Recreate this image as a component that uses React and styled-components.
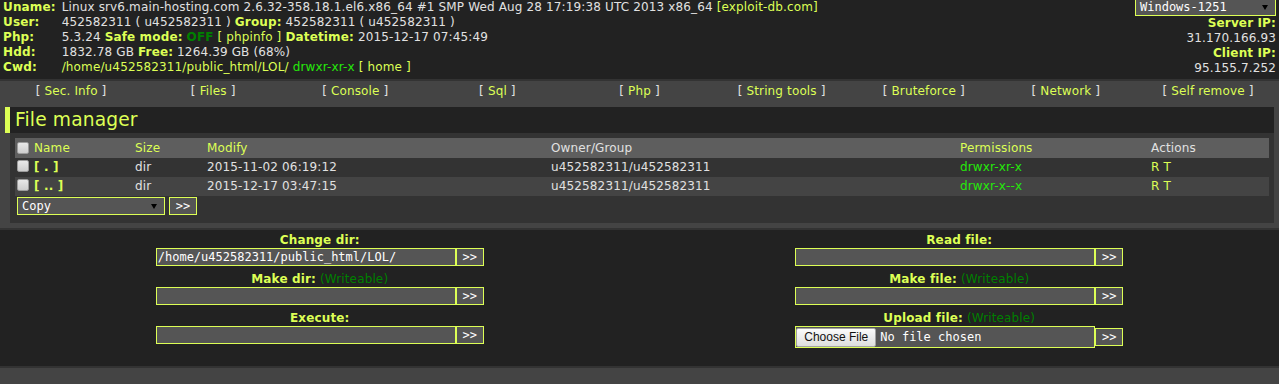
import styled, { createGlobalStyle } from "styled-components";

const SANS = `"DejaVu Sans", Verdana, sans-serif`;
const MONO = `"DejaVu Sans Mono", "Liberation Mono", monospace`;
const LIME = "#df5";
const BRIGHT = "#25e80a";

const GlobalStyle = createGlobalStyle`
  body {
    margin: 0;
    background: #444;
    color: #e1e1e1;
    font: 12px/15px ${SANS};
    letter-spacing: 0.14px;
  }
`;

const InfoBar = styled.header`
  display: grid;
  grid-template-columns: auto 1fr auto;
  margin-top: -5px;
  padding: 3px 0;
  background: #222;
  white-space: nowrap;
`;

const InfoCell = styled.div`
  display: flex;
  flex-direction: column;
  align-items: ${(p) => (p.$right ? "flex-end" : "flex-start")};
  padding: ${(p) => (p.$right ? 0 : 2)}px 3px 0;
`;

const Line = styled.div`
  height: 15px;
`;

const Label = styled.span`
  color: ${LIME};
  font-weight: bold;
`;

const Link = styled.a`
  color: ${LIME};
  text-decoration: none;
  font-weight: ${(p) => (p.$bold ? "bold" : "normal")};
`;

const Perm = styled.span`
  color: ${BRIGHT};
`;

const Safe = styled.b`
  color: green;
`;

const Writeable = styled.span`
  color: green;
`;

const FakeSelect = styled.div`
  box-sizing: border-box;
  width: ${(p) => p.$w}px;
  height: 18px;
  display: flex;
  align-items: center;
  justify-content: space-between;
  padding: 0 7px 0 4px;
  background: #555;
  border: 1px solid ${LIME};
  color: #fff;
  font: 12px/16px ${MONO};
  letter-spacing: normal;

  &::after {
    content: "";
    border-left: 3px solid transparent;
    border-right: 3px solid transparent;
    border-top: 5px solid #000;
  }
`;

const Menu = styled.nav`
  display: grid;
  grid-template-columns: repeat(9, 1fr);
  border-top: 2px solid #333;
`;

const MenuItem = styled.div`
  padding: 3px;
  text-align: center;
  white-space: nowrap;
`;

const Main = styled.main`
  margin: 5px;
`;

const Title = styled.h1`
  margin: 0;
  padding: 2px 5px;
  border-left: 5px solid ${LIME};
  background: #222;
  color: ${LIME};
  font: normal 18.67px/22px ${SANS};
`;

const Content = styled.section`
  margin-left: 5px;
  padding: 5px;
  background: #333;
`;

const COLS = "17px 101px 72px 344px 409px 191px 1fr";

const Row = styled.div`
  display: grid;
  grid-template-columns: ${COLS};
  align-items: center;
  height: ${(p) => (p.$head ? 20 : 19)}px;
  background: ${(p) => (p.$head ? "#5e5e5e" : p.$tone === 2 ? "#333" : "#444")};
`;

const Cell = styled.div`
  padding: 0 2px;
  white-space: nowrap;
  color: ${(p) => (p.$lime ? LIME : "inherit")};
`;

const Check = styled.span`
  display: block;
  box-sizing: border-box;
  width: 12px;
  height: 12px;
  margin-left: 2px;
  align-self: start;
  margin-top: ${(p) => (p.$head ? 4 : 2)}px;
  border: 1px solid #9c9c9c;
  border-radius: 2px;
  background: linear-gradient(#e8e8e8, #cdcdcd);
`;

const ActionBar = styled.div`
  display: flex;
  gap: 4px;
  padding: 1px 2px 3px;
`;

const Submit = styled.button`
  box-sizing: border-box;
  width: 28px;
  height: 18px;
  margin: 0;
  padding: 0;
  background: #555;
  border: 1px solid ${LIME};
  color: #fff;
  font: 12px/16px ${MONO};
`;

const Tools = styled.div`
  display: grid;
  grid-template-columns: 1fr 1fr;
  background: #222;
  border-top: 2px solid #333;
  border-bottom: 2px solid #333;
`;

const ToolCell = styled.form`
  display: flex;
  flex-direction: column;
  align-items: center;
  margin: 0;
  padding: 3px 3px ${(p) => (p.$extra ? 18 : 3)}px;
`;

const ToolLabel = styled.div`
  line-height: 15px;
`;

const Field = styled.div`
  display: flex;
  align-items: center;
`;

const TextInput = styled.input`
  box-sizing: border-box;
  width: 300px;
  height: 18px;
  margin: 0;
  padding: 0 1px;
  background: #555;
  border: 1px solid ${LIME};
  color: #fff;
  font: 12px ${MONO};
  outline: none;
`;

const FilePicker = styled.label`
  box-sizing: border-box;
  width: 300px;
  height: 22px;
  display: flex;
  align-items: center;
  gap: 4px;
  background: #555;
  border: 1px solid ${LIME};
  color: #fff;
  font: 12px/16px ${MONO};
  letter-spacing: normal;
`;

const ChooseButton = styled.span`
  box-sizing: border-box;
  width: 80px;
  height: 19px;
  display: flex;
  align-items: center;
  justify-content: center;
  background: linear-gradient(#fbfbfb, #dedede);
  border: 1px solid #a3a3a3;
  border-radius: 2px;
  color: #111;
  font: 12px "Liberation Sans", Arial, sans-serif;
`;

const menu = [
  "Sec. Info",
  "Files",
  "Console",
  "Sql",
  "Php",
  "String tools",
  "Bruteforce",
  "Network",
  "Self remove",
];

const files = [
  { name: "[ . ]", date: "2015-11-02 06:19:12", perms: "drwxr-xr-x" },
  { name: "[ .. ]", date: "2015-12-17 03:47:15", perms: "drwxr-x--x" },
];

const ToolForm = ({ label, writeable, value, extra, children }) => (
  <ToolCell $extra={extra} onSubmit={(e) => e.preventDefault()}>
    <ToolLabel>
      <Label>{label}</Label>
      {writeable && <Writeable> (Writeable)</Writeable>}
    </ToolLabel>
    <Field>
      {children || <TextInput type="text" defaultValue={value} />}
      <Submit type="submit">&gt;&gt;</Submit>
    </Field>
  </ToolCell>
);

export default function App() {
  return (
    <>
      <GlobalStyle />
      <InfoBar>
        <InfoCell>
          {["Uname:", "User:", "Php:", "Hdd:", "Cwd:"].map((l) => (
            <Line key={l}>
              <Label>{l}</Label>
            </Line>
          ))}
        </InfoCell>
        <InfoCell>
          <Line>
            Linux srv6.main-hosting.com 2.6.32-358.18.1.el6.x86_64 #1 SMP Wed Aug 28
            17:19:38 UTC 2013 x86_64 <Link href="#">[exploit-db.com]</Link>
          </Line>
          <Line>
            452582311 ( u452582311 ) <Label>Group:</Label> 452582311 ( u452582311 )
          </Line>
          <Line>
            5.3.24 <Label>Safe mode:</Label> <Safe>OFF</Safe>{" "}
            <Link href="#">[ phpinfo ]</Link> <Label>Datetime:</Label> 2015-12-17
            07:45:49
          </Line>
          <Line>
            1832.78 GB <Label>Free:</Label> 1264.39 GB (68%)
          </Line>
          <Line>
            <Link href="#">/home/u452582311/public_html/LOL/</Link>{" "}
            <Perm>drwxr-xr-x</Perm> <Link href="#">[ home ]</Link>
          </Line>
        </InfoCell>
        <InfoCell $right>
          <FakeSelect $w={141}>Windows-1251</FakeSelect>
          <Line>
            <Label>Server IP:</Label>
          </Line>
          <Line>31.170.166.93</Line>
          <Line>
            <Label>Client IP:</Label>
          </Line>
          <Line>95.155.7.252</Line>
        </InfoCell>
      </InfoBar>

      <Menu>
        {menu.map((m) => (
          <MenuItem key={m}>
            [ <Link href="#">{m}</Link> ]
          </MenuItem>
        ))}
      </Menu>

      <Main>
        <Title>File manager</Title>
        <Content>
          <Row $head>
            <Check $head />
            <Cell $lime>Name</Cell>
            <Cell $lime>Size</Cell>
            <Cell $lime>Modify</Cell>
            <Cell>Owner/Group</Cell>
            <Cell $lime>Permissions</Cell>
            <Cell>Actions</Cell>
          </Row>
          {files.map((f, i) => (
            <Row key={f.name} $tone={i % 2 === 0 ? 2 : 1}>
              <Check />
              <Cell>
                <Link href="#" $bold>
                  {f.name}
                </Link>
              </Cell>
              <Cell>dir</Cell>
              <Cell>{f.date}</Cell>
              <Cell>u452582311/u452582311</Cell>
              <Cell>
                <Perm>{f.perms}</Perm>
              </Cell>
              <Cell>
                <Link href="#">R</Link> <Link href="#">T</Link>
              </Cell>
            </Row>
          ))}
          <ActionBar>
            <FakeSelect $w={148}>Copy</FakeSelect>
            <Submit type="button">&gt;&gt;</Submit>
          </ActionBar>
        </Content>
      </Main>

      <Tools>
        <ToolForm label="Change dir:" value="/home/u452582311/public_html/LOL/" />
        <ToolForm label="Read file:" />
        <ToolForm label="Make dir:" writeable />
        <ToolForm label="Make file:" writeable />
        <ToolForm label="Execute:" />
        <ToolForm label="Upload file:" writeable extra>
          <FilePicker>
            <ChooseButton>Choose File</ChooseButton>
            No file chosen
          </FilePicker>
        </ToolForm>
      </Tools>
    </>
  );
}
